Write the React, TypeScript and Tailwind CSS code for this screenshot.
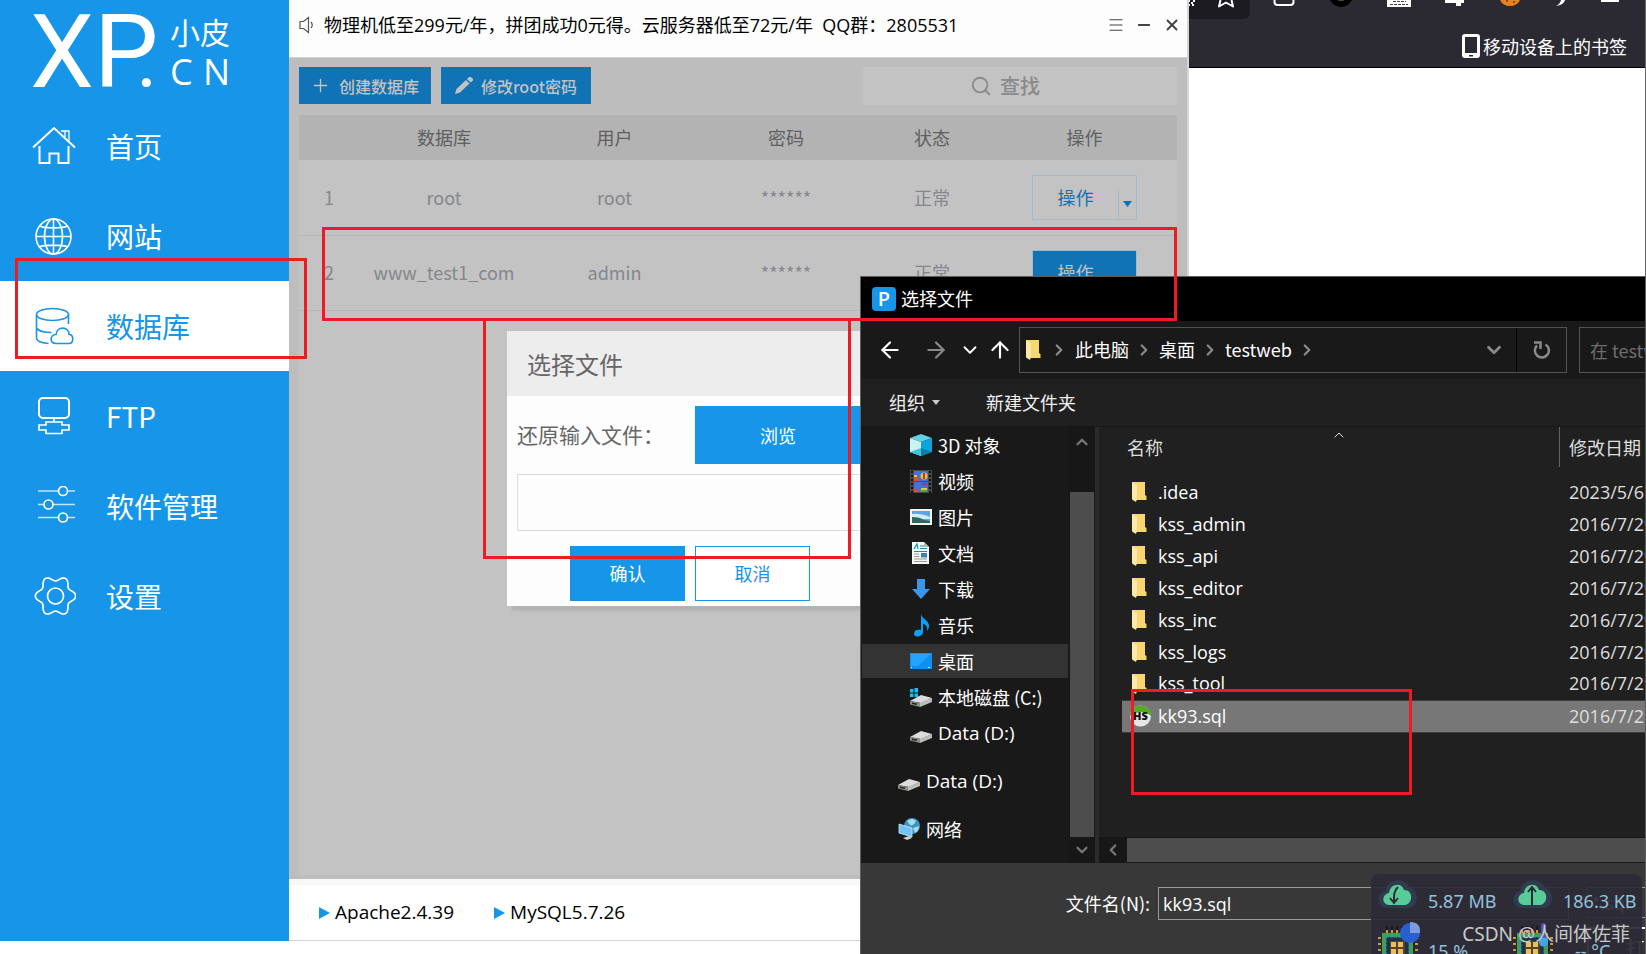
import { useState } from 'react'
import type { ReactNode } from 'react'
import {
  ArrowLeft,
  ArrowRight,
  ArrowUp,
  ChevronDown,
  ChevronLeft,
  ChevronRight,
  ChevronUp,
  Menu,
  Minus,
  Plus,
  Search,
  X,
} from 'lucide-react'

type NavItem = { key: string; label: string; icon: ReactNode }
type DatabaseRow = { id: number; name: string; user: string; active: boolean }
type Place = { key: string; label: string; icon: ReactNode; root?: boolean; latin?: boolean }
type FileRow = { name: string; date: string; kind: 'folder' | 'sql' }

const databases: DatabaseRow[] = [
  { id: 1, name: 'root', user: 'root', active: false },
  { id: 2, name: 'www_test1_com', user: 'admin', active: true },
]

const files: FileRow[] = [
  { name: '.idea', date: '2023/5/6', kind: 'folder' },
  { name: 'kss_admin', date: '2016/7/29', kind: 'folder' },
  { name: 'kss_api', date: '2016/7/29', kind: 'folder' },
  { name: 'kss_editor', date: '2016/7/29', kind: 'folder' },
  { name: 'kss_inc', date: '2016/7/29', kind: 'folder' },
  { name: 'kss_logs', date: '2016/7/29', kind: 'folder' },
  { name: 'kss_tool', date: '2016/7/29', kind: 'folder' },
  { name: 'kk93.sql', date: '2016/7/29', kind: 'sql' },
]

// six-lobed outline for the settings gear
const gearOutline = Array.from({ length: 72 }, (_, i) => {
  const angle = (i * Math.PI) / 36
  const radius = 17.6 + 2.6 * Math.cos(6 * angle)
  return `${(24.5 + radius * Math.cos(angle)).toFixed(1)},${(20 + radius * Math.sin(angle)).toFixed(1)}`
}).join(' ')

function HomeIcon() {
  return (
    <svg width="44" height="40" viewBox="0 0 44 40" fill="none" stroke="currentColor" strokeWidth="1.6">
      <path d="M1 21.500 22 2l21 19.500" strokeWidth="2" />
      <path d="M29 5h8v10M33 5v6" strokeWidth="1.300" />
      <path d="M7.500 20v17h10V27.500h9V37h10V20" strokeWidth="2" />
    </svg>
  )
}

function GlobeIcon() {
  return (
    <svg width="44" height="40" viewBox="0 0 44 40" fill="none" stroke="currentColor" strokeWidth="1.600">
      <circle cx="21.500" cy="20.500" r="17.500" />
      <ellipse cx="21.500" cy="20.500" rx="9" ry="17.500" />
      <path d="M21.500 3v35M4 20.500h35M7.500 10c4 2.500 24 2.500 28 0M7.500 31c4-2.500 24-2.500 28 0" />
    </svg>
  )
}

function DatabaseIcon() {
  return (
    <svg width="44" height="40" viewBox="0 0 44 40" fill="none" stroke="currentColor" strokeWidth="1.600">
      <ellipse cx="20.500" cy="8.500" rx="16" ry="6" />
      <path d="M4.500 8.500V32c0 3 5 5 12 5.500M36.500 8.500V18M4.500 22c2 3 8 4.500 15 4.500" />
      <path d="M24 37.500c-7 0-6-9 0-9 1-9 13-8 13 0 5 0 5 9 0 9z" />
    </svg>
  )
}

function FtpIcon() {
  return (
    <svg width="44" height="40" viewBox="0 0 44 40" fill="none" stroke="currentColor" strokeWidth="2">
      <rect x="7" y="2" width="30" height="20" rx="4" />
      <path d="M22 22v4M14 26h16v3h7v5h-7v3.500H14V34H7v-5h7z" strokeWidth="1.700" />
    </svg>
  )
}

function SlidersIcon() {
  return (
    <svg width="44" height="40" viewBox="0 0 44 40" fill="none" stroke="currentColor" strokeWidth="1.700">
      <path d="M6 5h20M36 5h7M6 18.500h6M21 18.500h22M6 31.500h20M36 31.500h7" opacity=".75" />
      <circle cx="31" cy="5" r="4.500" />
      <circle cx="16.500" cy="18.500" r="4.500" />
      <circle cx="31" cy="31.500" r="4.500" />
    </svg>
  )
}

function GearIcon() {
  return (
    <svg width="44" height="42" viewBox="1 -1 44 42" fill="none" stroke="currentColor" strokeWidth="1.700">
      <polygon points={gearOutline} />
      <circle cx="24.500" cy="20" r="8" />
    </svg>
  )
}

const navItems: NavItem[] = [
  { key: 'home', label: '首页', icon: <HomeIcon /> },
  { key: 'site', label: '网站', icon: <GlobeIcon /> },
  { key: 'database', label: '数据库', icon: <DatabaseIcon /> },
  { key: 'ftp', label: 'FTP', icon: <FtpIcon /> },
  { key: 'software', label: '软件管理', icon: <SlidersIcon /> },
  { key: 'settings', label: '设置', icon: <GearIcon /> },
]

function FolderIcon() {
  return (
    <svg width="15" height="22" viewBox="0 0 15 22" className="shrink-0">
      <path d="M0 1h13v13l1.500 1v4H4z" fill="#f6d673" />
      <path d="M0 1l5 3v14l-1 3-4-2.500z" fill="#ffe9a8" />
    </svg>
  )
}

function SqlIcon() {
  return (
    <svg width="23" height="22" viewBox="0 0 23 22" className="shrink-0">
      <circle cx="11.500" cy="11" r="10.500" fill="#e6e6e6" />
      <path d="M.8 11a10.700 10.500 0 0 1 21.400 0q-10-8-21.400 0z" fill="#4fae1c" />
      <text x="11.500" y="15" textAnchor="middle" fontSize="11" fontWeight="800" fontFamily="Open Sans" fill="#111">
        HS
      </text>
    </svg>
  )
}

function CubeIcon() {
  return (
    <svg width="22" height="22" viewBox="0 0 22 22">
      <path d="M0 4 11 0l11 4-11 4z" fill="#5fd3e2" />
      <path d="M0 4l11 4v14L0 18z" fill="#c9f4f4" />
      <path d="M22 4 11 8v14l11-4z" fill="#0fa4dc" />
      <path d="M0 18l11-4v8z" fill="#3fc6d8" />
      <path d="M22 18l-11-4v8z" fill="#0b7fa6" />
    </svg>
  )
}

function FilmIcon() {
  return (
    <svg width="22" height="23" viewBox="0 0 22 23">
      <path d="M0 0h22v23H0z" fill="#4a4a4a" />
      <path d="M4 1h14v10H4zM4 12h14v10H4z" fill="#3f74d6" />
      <path d="M4 6l3 1 3 4H4zM4 19l2-1 3 4H4z" fill="#e04a3a" />
      <path d="M4 5h3v2H4zM11 18h6v2h-6z" fill="#e9c62f" />
      <circle cx="14" cy="6" r="3.500" fill="#e9c62f" />
      <path d="M13 3h2v6h-2zM11 13h7l-3 3z" fill="#c8352b" />
      <path d="M10 20h7v2h-7z" fill="#4aa63c" />
      <path d="M2 1v22M20 1v22" stroke="#111" strokeWidth="2" strokeDasharray="2 2" />
    </svg>
  )
}

function PhotoIcon() {
  return (
    <svg width="22" height="16" viewBox="0 0 22 16">
      <path d="M0 0h22v16H0z" fill="#f4f4f4" />
      <path d="M2 2h18v12H2z" fill="#5aa5e6" />
      <path d="M2 5q8-1 18 3v2H2z" fill="#d6ebf7" />
      <path d="M2 8q8 0 12 3l6 1v2H2z" fill="#2d6a5c" />
    </svg>
  )
}

function DocIcon() {
  return (
    <svg width="22" height="22" viewBox="0 0 22 22">
      <path d="M2 0h12l5 5v17H2z" fill="#f7f7f7" />
      <path d="M14 0l5 5h-5z" fill="#b5b5b5" />
      <path d="M4 7l3-5 1 5M10 4h4M10 6.500h7M4 9.500h13" stroke="#1f86d0" strokeWidth="1.200" fill="none" />
      <path d="M4 12h5M4 14.500h5M4 17h13M4 19.500h13" stroke="#9a9a9a" />
      <path d="M11 11h6v4.500h-6z" fill="#3b82b5" />
    </svg>
  )
}

function DownloadIcon() {
  return (
    <svg width="22" height="20" viewBox="0 0 22 20">
      <path d="M7 0h8v10h5l-9 10-9-10h5z" fill="#3a96e8" />
    </svg>
  )
}

function MusicIcon() {
  return (
    <svg width="22" height="23" viewBox="0 0 22 23">
      <path d="M11 0c1 5 8 6 8 12 0 2-1 4-2 5 1-5-2-7-4-7v8c0 5-9 6-9 2s3-5 7-4z" fill="#0aa0f5" />
    </svg>
  )
}

function DesktopIcon() {
  return (
    <svg width="22" height="16" viewBox="0 0 22 16">
      <path d="M0 0h22v16H0z" fill="#0f8fef" />
      <path d="M1 1h20L8 13H1z" fill="#22a5ff" />
      <path d="M1 14.500h20" stroke="#d5ecff" strokeDasharray="1 16 2 1" />
    </svg>
  )
}

function DriveIcon({ system = false }: { system?: boolean }) {
  return (
    <svg width="22" height="22" viewBox="0 0 22 22">
      {system && <path d="M0 3h3.500v3.500H0zM4.500 2H8v4.500H4.500zM0 7.500h3.500V11H0zM4.500 7.500H8V11H4.500z" fill="#16c0f0" />}
      <path d="M0 15l11-6 11 3-11 5z" fill="#dcdcdc" />
      <path d="M0 15l10 2v4L0 18.500z" fill="#8a8a8a" />
      <path d="M10 17l12-5v4l-12 5z" fill="#bcbcbc" />
      <path d="M2 16.500l5 1v1.500l-5-1z" fill="#222" />
      <path d="M7.500 18h1.500v1.200H7.500z" fill="#3fdc4a" />
    </svg>
  )
}

function NetworkIcon() {
  return (
    <svg width="22" height="22" viewBox="0 0 22 22">
      <circle cx="14" cy="8" r="8" fill="#3f93bf" />
      <path d="M9 3q5-4 9 0-2 5-6 4zM15 10l6-2q0 5-4 7z" fill="#a8d9ec" />
      <path d="M1 6l13 4v9L1 15z" fill="#6fc3f7" stroke="#d5e9f5" strokeWidth=".8" />
      <path d="M5 20l6-2 3 2-5 2z" fill="#cfcfcf" />
    </svg>
  )
}

const places: Place[] = [
  { key: 'objects', label: '3D 对象', icon: <CubeIcon /> },
  { key: 'videos', label: '视频', icon: <FilmIcon /> },
  { key: 'pictures', label: '图片', icon: <PhotoIcon /> },
  { key: 'documents', label: '文档', icon: <DocIcon /> },
  { key: 'downloads', label: '下载', icon: <DownloadIcon /> },
  { key: 'music', label: '音乐', icon: <MusicIcon /> },
  { key: 'desktop', label: '桌面', icon: <DesktopIcon /> },
  { key: 'c', label: '本地磁盘 (C:)', icon: <DriveIcon system /> },
  { key: 'd', label: 'Data (D:)', icon: <DriveIcon />, latin: true },
  { key: 'd-root', label: 'Data (D:)', icon: <DriveIcon />, root: true, latin: true },
  { key: 'network', label: '网络', icon: <NetworkIcon />, root: true },
]

function BrowserWindow() {
  return (
    <div className="flex min-h-screen flex-col items-stretch border-r border-[#6b6b6b] bg-white">
      <header className="flex h-[68px] flex-col items-end border-b border-black bg-[#2b2a33]">
        <div className="flex h-[19px] w-[457px] overflow-hidden">
          <div className="flex w-[62px] justify-between rounded-br-md bg-[#1c1b22]">
            <svg width="8" height="8" viewBox="0 0 8 8" fill="#fff">
              <path d="M0 0h2v2H0zM3 2h2v2H3zM0 4h2v2H0zM4 4h2v2H4zM5 0h2v2H5z" />
            </svg>
            <svg width="18" height="9" viewBox="0 0 18 9" className="mr-[15px]" fill="none" stroke="#fff" strokeWidth="2">
              <path d="M3.500 0 2 6.500 9 2.500l7 4L14.500 0" strokeLinejoin="round" />
            </svg>
          </div>
          <div className="flex flex-1 items-start justify-between pr-[26px] pl-[23px]">
            <svg width="22" height="7" viewBox="0 0 22 7" fill="none" stroke="#fff" strokeWidth="2">
              <path d="M1.500 0v2q0 3 3 3h13q3 0 3-3V0" />
            </svg>
            <svg width="24" height="8" viewBox="0 0 24 8">
              <path d="M1 0q4 7 11 7T23 0z" />
              <path d="M9 0q3 1 6 0" stroke="#555" fill="none" />
            </svg>
            <svg width="24" height="8" viewBox="0 0 24 8">
              <path d="M0 0h24v7H0z" fill="#fff" />
              <path d="M6 1.500h13M3 4.500h18" stroke="#444" strokeDasharray="3 1" />
            </svg>
            <svg width="20" height="7" viewBox="0 0 20 7">
              <path d="M0 0h19v3h-3v3h-5V3H0z" fill="#fff" />
            </svg>
            <svg width="22" height="7" viewBox="0 0 22 7">
              <path d="M1 0q3 6 10 6T21 0z" fill="#e8821e" />
              <path d="M7 1h2M14 2h2" stroke="#6b3206" strokeWidth="1.500" />
            </svg>
            <svg width="12" height="7" viewBox="0 0 12 7">
              <path d="M10 0q-1 5-9 6 4-2 5-6z" fill="#fff" />
            </svg>
            <svg width="18" height="3" viewBox="0 0 18 3">
              <path d="M0 0h18v2H0z" fill="#fff" />
            </svg>
          </div>
        </div>
        <a href="#mobile" className="mt-[11px] mr-[18px] flex h-8 items-center gap-[3px] text-[18px] text-white">
          <svg width="18" height="24" viewBox="0 0 18 24">
            <rect width="18" height="24" rx="3" fill="#fff" />
            <path d="M3 3h12v16H3z" fill="#2b2a33" />
            <path d="M7 21h4v1.500H7z" fill="#2b2a33" />
          </svg>
          移动设备上的书签
        </a>
      </header>
    </div>
  )
}

function Sidebar({ current, onSelect }: { current: string; onSelect: (key: string) => void }) {
  return (
    <nav className="flex w-[289px] shrink-0 flex-col bg-[#1695e9] text-white">
      <div className="flex h-[101px] pt-4 pl-[30px]">
        <div className="flex w-[140px] items-baseline font-[Roboto,sans-serif] text-[102px] leading-[73px]">
          <span>XP</span>
          <span className="-ml-[22px] text-[80px]">.</span>
        </div>
        <div className="flex w-[60px] flex-col">
          <span className="text-[30px] leading-[30px]">小皮</span>
          <span className="flex justify-between font-['Open_Sans',sans-serif] text-[36px] leading-[52px]">
            <span>C</span>
            <span>N</span>
          </span>
        </div>
      </div>
      {navItems.map((item) => (
        <button
          key={item.key}
          type="button"
          onClick={() => onSelect(item.key)}
          className={`flex h-[90px] w-full items-center gap-[30px] pl-8 text-[28px] ${
            current === item.key ? 'bg-white text-[#1695e9]' : 'text-white'
          }`}
        >
          {item.icon}
          {item.label}
        </button>
      ))}
    </nav>
  )
}

function ActionButton({ active }: { active: boolean }) {
  return (
    <button
      type="button"
      className={`mx-auto flex h-[45px] w-[105px] items-end border border-[#a6b9c6] ${
        active ? 'bg-[#1073b5] text-[#c3c3c3]' : 'text-[#1073b5]'
      }`}
    >
      <span className="flex-1 self-center">操作</span>
      <span className={`flex h-[30px] w-[18px] items-center justify-center ${active ? '' : 'border-l border-[#a6b9c6]'}`}>
        <svg width="9" height="6" viewBox="0 0 9 6" fill="currentColor">
          <path d="M0 0h9L4.500 6z" />
        </svg>
      </span>
    </button>
  )
}

function DatabaseTable() {
  return (
    <table className="w-full table-fixed border-collapse text-center text-[18px]">
      <thead>
        <tr className="h-[45px] bg-[#b3b3b3] text-[#5f5f5f]">
          <th className="w-[60px]" aria-label="序号" />
          <th className="w-[170px] font-normal">数据库</th>
          <th className="w-[171px] font-normal">用户</th>
          <th className="w-[172px] font-normal">密码</th>
          <th className="w-[120px] font-normal">状态</th>
          <th className="font-normal">操作</th>
        </tr>
      </thead>
      <tbody>
        {databases.map((row) => (
          <tr key={row.id} className="h-[75px] border-b border-[#b5b5b5] text-[#84878c]">
            <td>{row.id}</td>
            <td>{row.name}</td>
            <td>{row.user}</td>
            <td>******</td>
            <td>正常</td>
            <td>
              <ActionButton active={row.active} />
            </td>
          </tr>
        ))}
      </tbody>
    </table>
  )
}

function RestoreModal() {
  return (
    <form className="absolute top-[331px] left-[507px] w-[464px] bg-[#fdfdfd] shadow-[5px_5px_2px_rgba(0,0,0,0.08)]">
      <h2 className="h-[65px] bg-[#ededed] pl-[20px] text-[24px] leading-[65px] text-[#666]">选择文件</h2>
      <div className="flex flex-col gap-[10px] px-[10px] pt-[10px] pb-[5px]">
        <div className="flex items-center">
          <label htmlFor="restore" className="w-[178px] text-[21px] text-[#666]">
            还原输入文件：
          </label>
          <button type="button" className="h-[58px] w-[166px] bg-[#1695e9] text-[18px] text-white">
            浏览
          </button>
        </div>
        <input id="restore" className="h-[57px] w-full border border-[#dcdcdc] bg-[#fdfdfd] px-3 text-[18px]" />
        <div className="mt-[5px] flex gap-[10px] pl-[53px] text-[18px]">
          <button type="submit" className="h-[55px] w-[115px] bg-[#1695e9] text-white">
            确认
          </button>
          <button type="button" className="h-[55px] w-[115px] border border-[#1695e9] bg-white text-[#1695e9]">
            取消
          </button>
        </div>
      </div>
    </form>
  )
}

function PanelWindow() {
  const [section, setSection] = useState('database')

  return (
    <div className="absolute top-0 right-[457px] bottom-[13px] left-0 flex bg-[#fdfdfd]">
      <Sidebar current={section} onSelect={setSection} />
      <div className="flex min-w-0 flex-1 flex-col border-r-2 border-[#d6d6d6]">
        <header className="flex h-[58px] items-center border-b border-[#d0d0d0] pb-[7px] pl-[10px] text-[18px] text-black">
          <svg width="16" height="18" viewBox="0 0 16 18" fill="none" stroke="#555" strokeWidth="1.200">
            <path d="M1 5.500h3.500L9.500 1.500v15l-5-4H1zM12 6q2.500 3 0 6" />
          </svg>
          <p className="ml-[9px] flex-1 font-['Open_Sans','Noto_Sans_CJK_SC',sans-serif] whitespace-pre">
            物理机低至299元/年，拼团成功0元得。云服务器低至72元/年  QQ群：2805531
          </p>
          <div className="flex items-center gap-[10px] pr-[6px] text-[#444]">
            <button type="button" aria-label="菜单">
              <Menu size={18} strokeWidth={1.500} />
            </button>
            <button type="button" aria-label="最小化">
              <Minus size={18} strokeWidth={2.500} />
            </button>
            <button type="button" aria-label="关闭">
              <X size={18} strokeWidth={2.500} />
            </button>
          </div>
        </header>

        <main className="flex flex-1 flex-col bg-[#bdbdbd] px-[10px] pt-[9px] pb-1">
          <div className="flex gap-[10px] text-[16px] font-medium text-[#c3c3c3]">
            <button type="button" className="flex h-[37px] w-[132px] items-center gap-2 bg-[#1073b5] pl-[11px]">
              <Plus size={21} strokeWidth={1.500} />
              创建数据库
            </button>
            <button type="button" className="flex h-[37px] w-[150px] items-center gap-2 bg-[#1073b5] pl-[14px]">
              <svg width="18" height="17" viewBox="0 0 18 17" fill="currentColor">
                <path d="M0 17l1.500-5L11 3l3.500 3.500L5 15.500zM12 2l2-2h2l2 2v1.500l-2.500 2z" />
              </svg>
              修改root密码
            </button>
            <label className="ml-auto flex h-[38px] w-[314px] items-center bg-[#c3c3c3] pl-[107px] text-[#8a8a8a]">
              <Search size={22} strokeWidth={2} />
              <input aria-label="查找" placeholder="查找" className="ml-2 w-20 text-[20px] placeholder:text-[#8a8a8a]" />
            </label>
          </div>
          <div className="mt-[10px] flex-1 bg-[#c3c3c3]">
            <DatabaseTable />
          </div>
        </main>

        <footer className="flex h-[62px] items-center gap-10 border-t-[6px] border-b border-t-[#f8f8f8] border-b-[#d4d4d4] bg-white pl-[30px] font-['Open_Sans',sans-serif] text-[19px] text-black">
          {['Apache2.4.39', 'MySQL5.7.26'].map((service) => (
            <span key={service} className="flex items-center gap-[5px]">
              <svg width="11" height="12" viewBox="0 0 11 12" fill="#1695e9">
                <path d="M0 0l11 6-11 6z" />
              </svg>
              {service}
            </span>
          ))}
        </footer>
      </div>
      <RestoreModal />
    </div>
  )
}

function AddressBar() {
  return (
    <div className="flex h-[58px] items-center overflow-hidden bg-[#191919] pb-px text-white">
      <div className="flex w-[158px] shrink-0 items-center pl-[16px]">
        <button type="button" aria-label="后退">
          <ArrowLeft size={26} />
        </button>
        <button type="button" aria-label="前进" className="ml-5 text-[#8a8a8a]">
          <ArrowRight size={26} />
        </button>
        <button type="button" aria-label="最近位置" className="ml-[10px]">
          <ChevronDown size={22} />
        </button>
        <button type="button" aria-label="向上" className="ml-[6px]">
          <ArrowUp size={26} />
        </button>
      </div>
      <div className="flex h-[46px] flex-1 items-center border border-[#535353] pl-[6px] text-[18px]">
        <FolderIcon />
        <ChevronRight size={18} strokeWidth={3} className="mr-[7px] ml-[9px] text-[#8a8a8a]" />
        此电脑
        <ChevronRight size={18} strokeWidth={3} className="mx-[6px] text-[#8a8a8a]" />
        桌面
        <ChevronRight size={18} strokeWidth={3} className="mx-[6px] text-[#8a8a8a]" />
        testweb
        <ChevronRight size={18} strokeWidth={3} className="mx-[6px] text-[#8a8a8a]" />
        <button type="button" aria-label="历史" className="ml-auto flex h-full w-[46px] items-center justify-center border-r border-black text-[#8a8a8a]">
          <ChevronDown size={22} strokeWidth={3} />
        </button>
        <button type="button" aria-label="刷新" className="flex h-full w-[49px] items-center justify-center text-[#8a8a8a]">
          <svg width="18" height="18" viewBox="0 0 18 18" fill="none" stroke="currentColor" strokeWidth="2.500">
            <path d="M12.500 3.500a7 7 0 1 1-8.500 1" />
            <path d="M1 1.500h6.500V8" />
          </svg>
        </button>
      </div>
      <input
        aria-label="搜索"
        placeholder="在 testweb 中搜索"
        className="-mr-[200px] ml-3 h-[46px] w-[266px] shrink-0 border border-[#535353] pl-[10px] text-[18px] placeholder:text-[#6e6e6e]"
      />
    </div>
  )
}

function PlaceTree() {
  return (
    <div className="flex w-[234px] shrink-0 bg-[#191919]">
      <ul className="flex-1">
        {places.map((place) => (
          <li key={place.key} className={`flex h-9 items-center py-px pl-px ${place.root ? 'mt-3' : ''}`}>
            <a
              href={`#${place.key}`}
              className={`flex h-full w-[206px] items-center gap-[6px] whitespace-nowrap ${
                place.root ? 'pl-[36px]' : 'pl-[48px]'
              } ${place.key === 'desktop' ? 'bg-[#333]' : ''} ${
                place.latin ? "font-['Open_Sans',sans-serif] text-[19px]" : 'text-[18px]'
              }`}
            >
              {place.icon}
              {place.label}
            </a>
          </li>
        ))}
      </ul>
      <div className="flex w-[26px] flex-col items-center bg-[#171717] text-[#777]">
        <span className="flex h-[65px] items-start pt-[6px]">
          <ChevronUp size={18} strokeWidth={3} />
        </span>
        <span className="w-6 flex-1 bg-[#4d4d4d]" />
        <span className="flex h-[26px] items-center">
          <ChevronDown size={18} strokeWidth={3} />
        </span>
      </div>
    </div>
  )
}

function FileList() {
  const [selected, setSelected] = useState('kk93.sql')

  return (
    <div className="flex min-w-0 flex-1 flex-col overflow-hidden border-l-4 border-[#2b2b2b] bg-[#202020]">
      <div className="flex-1 pl-[23px]">
        <table className="w-full table-fixed border-collapse text-left text-[18px] whitespace-nowrap">
          <thead>
            <tr className="h-[49px] align-top text-[#dedede]">
              <th className="pl-[5px] font-normal">
                <span className="flex h-[40px] items-center">
                  名称
                  <ChevronUp size={16} strokeWidth={1.500} className="mr-[212px] ml-auto self-start" />
                </span>
              </th>
              <th className="w-[86px] font-normal">
                <span className="flex h-[40px] items-center border-l border-[#636363] pl-[9px]">修改日期</span>
              </th>
            </tr>
          </thead>
          <tbody className="font-['Open_Sans',sans-serif]">
            {files.map((file) => (
              <tr
                key={file.name}
                onClick={() => setSelected(file.name)}
                className={selected === file.name ? 'h-8 border-y border-[#3c3c3c] bg-[#777]' : 'h-8'}
              >
                <td className="text-white">
                  <span className={`flex items-center ${file.kind === 'folder' ? 'gap-[11px] pl-[10px]' : 'gap-[6px] pl-[7px]'}`}>
                    {file.kind === 'folder' ? <FolderIcon /> : <SqlIcon />}
                    {file.name}
                  </span>
                </td>
                <td className="overflow-hidden pl-[10px] text-[#dedede]">{file.date}</td>
              </tr>
            ))}
          </tbody>
        </table>
      </div>
      <div className="flex h-[26px] items-center border-y border-[#171717] bg-[#171717] text-[#777]">
        <span className="flex w-[28px] justify-center">
          <ChevronLeft size={18} strokeWidth={3} />
        </span>
        <span className="h-6 flex-1 bg-[#4d4d4d]" />
      </div>
    </div>
  )
}

function OpenFileDialog() {
  return (
    <div className="absolute top-[276px] right-0 bottom-0 left-[860px] flex flex-col overflow-hidden border-t border-r border-l border-[#5e5e5e] bg-[#202020] text-white">
      <div className="flex h-[44px] shrink-0 items-center bg-black pb-px pl-[11px]">
        <span className="flex size-6 items-center justify-center rounded bg-[#1695e9] font-['Open_Sans',sans-serif] text-[20px] leading-6 font-semibold">
          P
        </span>
        <h2 className="ml-[5px] text-[18px]">选择文件</h2>
      </div>
      <AddressBar />
      <div className="flex h-[48px] items-center border-b border-[#171717] pl-[28px] text-[18px] text-[#f0f0f0]">
        <button type="button" className="flex items-center gap-[7px]">
          组织
          <svg width="8" height="5" viewBox="0 0 8 5" fill="#c8c8c8">
            <path d="M0 0h8L4 5z" />
          </svg>
        </button>
        <button type="button" className="ml-[46px]">
          新建文件夹
        </button>
      </div>
      <div className="flex min-h-0 flex-1">
        <PlaceTree />
        <FileList />
      </div>
      <div className="flex h-[91px] shrink-0 items-start bg-[#383838] pt-6">
        <label htmlFor="filename" className="w-[297px] shrink-0 pr-[8px] text-right text-[18px] leading-[33px]">
          文件名(N):
        </label>
        <input
          id="filename"
          defaultValue="kk93.sql"
          className="h-[33px] min-w-0 flex-1 border border-[#9a9a9a] bg-[#383838] pl-1 font-['Open_Sans',sans-serif] text-[18px]"
        />
        <div className="-mr-[140px] ml-[18px] flex w-[198px] shrink-0 flex-col gap-[9px] text-[18px]">
          <select aria-label="文件类型" className="h-[31px] appearance-none border border-[#9a9a9a] pl-1">
            <option>*.sql</option>
          </select>
          <button type="button" className="h-[40px] w-[140px] border-2 border-white bg-[#333]">
            打开(O)
          </button>
        </div>
      </div>
    </div>
  )
}

function CloudGauge({ up = false }: { up?: boolean }) {
  return (
    <svg width="40" height="30" viewBox="0 0 40 30" className="shrink-0">
      <path d="M9 28C-3 27-1 13 7 11 9-2 27-3 31 7c10 2 11 19 0 21z" fill="#323b4d" />
      <path d="M11 25c-8-1-7-11 0-12C12 3 24 2 26 10c10 0 9 14 1 15z" fill="#57cc99" />
      {up ? (
        <path d="M19 26V8M15 12l4-5 4 5" stroke="#2b2a33" strokeWidth="2" fill="none" />
      ) : (
        <path d="M20 7c-4 4-4 7-4 14M12 18l4 5 4-5" stroke="#2b2a33" strokeWidth="2" fill="none" />
      )}
    </svg>
  )
}

function ChipGauge({ heat = false }: { heat?: boolean }) {
  return (
    <svg width="44" height="34" viewBox="0 0 44 34" className="shrink-0">
      <path d="M9 4v6M14 4v6M19 4v6M24 4v6M29 4v6M0 16h6M0 22h6M0 28h6M34 16h6M34 22h6M34 28h6" stroke="#17171c" strokeWidth="2" />
      <path d="M9 8v3M14 8v3M19 8v3M24 8v3M0 16h3M0 22h3M0 28h3M37 16h3M37 22h3M37 28h3" stroke="#d49a32" strokeWidth="2" />
      <rect x="4" y="11" width="31" height="30" fill="#3f9e58" />
      <rect x="8" y="15" width="23" height="24" fill="#1d3448" stroke="#3f8fb0" strokeDasharray="3 1" />
      <rect x="12" y="19" width="15" height="16" fill="#57412a" />
      <path d="M13 20h5v5h-5zM20 20h5v5h-5zM13 27h5v5h-5zM20 27h5v5h-5z" fill="#e8c062" />
      {heat ? (
        <>
          <rect x="28" y="1" width="5" height="22" rx="2.500" fill="#5b4fa8" />
          <circle cx="30.500" cy="20" r="4.500" fill="#4aa3e8" />
        </>
      ) : (
        <>
          <circle cx="32" cy="11" r="10" fill="#2a5fd0" />
          <path d="M32 11V0q11 0 10 11z" fill="#7c9cdd" />
        </>
      )}
    </svg>
  )
}

function MonitorWidget() {
  return (
    <div className="absolute right-1 bottom-0 h-20 w-[271px] overflow-hidden rounded-t-lg bg-[#2c2b36]/93 pt-[6px] pl-[7px] font-['Noto_Sans','Noto_Sans_CJK_SC',sans-serif] text-[18px] text-[#93c1dc]">
      <div className="grid grid-cols-[50px_85px_50px_1fr] items-start gap-y-2 leading-[42px] whitespace-nowrap">
        <CloudGauge />
        <span className="h-[34px]">5.87 MB</span>
        <CloudGauge up />
        <span className="h-[34px]">186.3 KB</span>
        <ChipGauge />
        <span className="h-[34px] pt-2">15 %</span>
        <ChipGauge heat />
        <span className="h-[34px] pt-2 pl-3">-- °C</span>
      </div>
      <span className="absolute right-3 bottom-1 text-[19px] leading-[32px] whitespace-nowrap text-[#c9c9cc]">CSDN @人间体佐菲</span>
    </div>
  )
}

export default function App() {
  return (
    <div
      lang="zh-CN"
      className="relative min-h-screen overflow-hidden bg-white font-['Noto_Sans_CJK_SC',sans-serif] leading-normal"
    >
      <BrowserWindow />
      <PanelWindow />
      <OpenFileDialog />
      <MonitorWidget />

      {/* tutorial callouts */}
      <div className="pointer-events-none absolute top-[258px] left-[15px] h-[101px] w-[292px] border-3 border-[#ed1c24]" />
      <div className="pointer-events-none absolute top-[227px] left-[322px] h-[94px] w-[855px] border-3 border-[#ed1c24]" />
      <div className="pointer-events-none absolute top-[318px] left-[483px] h-[241px] w-[368px] border-3 border-[#ed1c24]" />
      <div className="pointer-events-none absolute top-[689px] left-[1131px] h-[106px] w-[281px] border-3 border-[#ed1c24]" />
    </div>
  )
}
